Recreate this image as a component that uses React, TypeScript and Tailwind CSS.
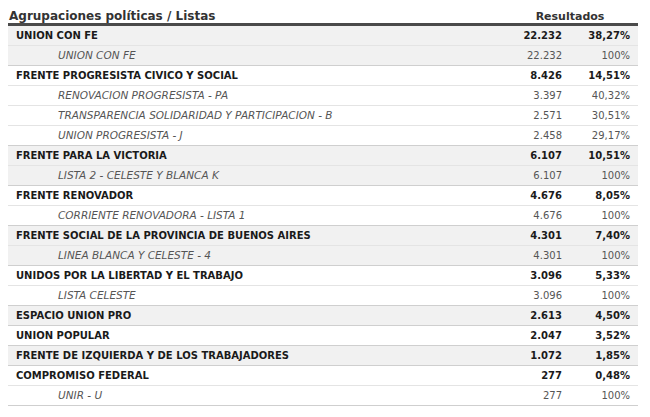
type Lista = { name: string; votes: string; pct: string };
type Grupo = { name: string; votes: string; pct: string; listas: Lista[] };

const grupos: Grupo[] = [
  {
    name: "UNION CON FE",
    votes: "22.232",
    pct: "38,27%",
    listas: [{ name: "UNION CON FE", votes: "22.232", pct: "100%" }],
  },
  {
    name: "FRENTE PROGRESISTA CIVICO Y SOCIAL",
    votes: "8.426",
    pct: "14,51%",
    listas: [
      { name: "RENOVACION PROGRESISTA - PA", votes: "3.397", pct: "40,32%" },
      { name: "TRANSPARENCIA SOLIDARIDAD Y PARTICIPACION - B", votes: "2.571", pct: "30,51%" },
      { name: "UNION PROGRESISTA - J", votes: "2.458", pct: "29,17%" },
    ],
  },
  {
    name: "FRENTE PARA LA VICTORIA",
    votes: "6.107",
    pct: "10,51%",
    listas: [{ name: "LISTA 2 - CELESTE Y BLANCA K", votes: "6.107", pct: "100%" }],
  },
  {
    name: "FRENTE RENOVADOR",
    votes: "4.676",
    pct: "8,05%",
    listas: [{ name: "CORRIENTE RENOVADORA - LISTA 1", votes: "4.676", pct: "100%" }],
  },
  {
    name: "FRENTE SOCIAL DE LA PROVINCIA DE BUENOS AIRES",
    votes: "4.301",
    pct: "7,40%",
    listas: [{ name: "LINEA BLANCA Y CELESTE - 4", votes: "4.301", pct: "100%" }],
  },
  {
    name: "UNIDOS POR LA LIBERTAD Y EL TRABAJO",
    votes: "3.096",
    pct: "5,33%",
    listas: [{ name: "LISTA CELESTE", votes: "3.096", pct: "100%" }],
  },
  { name: "ESPACIO UNION PRO", votes: "2.613", pct: "4,50%", listas: [] },
  { name: "UNION POPULAR", votes: "2.047", pct: "3,52%", listas: [] },
  { name: "FRENTE DE IZQUIERDA Y DE LOS TRABAJADORES", votes: "1.072", pct: "1,85%", listas: [] },
  {
    name: "COMPROMISO FEDERAL",
    votes: "277",
    pct: "0,48%",
    listas: [{ name: "UNIR - U", votes: "277", pct: "100%" }],
  },
];

const App = () => {
  return (
    <div
      className="w-[650px] h-[417px] bg-white pt-[8px] px-[8px] overflow-hidden"
      style={{ fontFamily: "'DejaVu Sans', Verdana, sans-serif" }}
    >
      <div className="w-[630px]">
        <div className="flex items-end h-[15px] font-bold text-[#333] text-[11px] leading-[13px]">
          <div className="flex-1 pl-px text-[12px]">Agrupaciones políticas / Listas</div>
          <div className="w-[136px] text-center">Resultados</div>
        </div>
        <div className="h-[3px] bg-[#4a4a4a]" />
        {grupos.map((g, i) => {
          const bg = i % 2 === 0 ? "bg-[#f1f1f1]" : "bg-white";
          return (
            <div key={g.name} className={bg}>
              <div
                className={`flex items-center h-[20px] border-b font-bold text-[10px] text-[#1a1a1a] ${
                  g.listas.length ? "border-[#e4e4e4]" : "border-[#cfcfcf]"
                }`}
              >
                <div className="flex-1 pl-2">{g.name}</div>
                <div className="w-[68px] text-right pr-2">{g.votes}</div>
                <div className="w-[68px] text-right pr-[8px]">{g.pct}</div>
              </div>
              {g.listas.map((l, j) => (
                <div
                  key={l.name}
                  className={`flex items-center h-[20px] border-b text-[10px] text-[#555] ${
                    j < g.listas.length - 1 ? "border-[#e4e4e4]" : "border-[#cfcfcf]"
                  }`}
                >
                  <div className="flex-1 pl-[50px] italic text-[10.5px]">{l.name}</div>
                  <div className="w-[68px] text-right pr-2">{l.votes}</div>
                  <div className="w-[68px] text-right pr-[8px]">{l.pct}</div>
                </div>
              ))}
            </div>
          );
        })}
      </div>
    </div>
  );
};

export default App;
